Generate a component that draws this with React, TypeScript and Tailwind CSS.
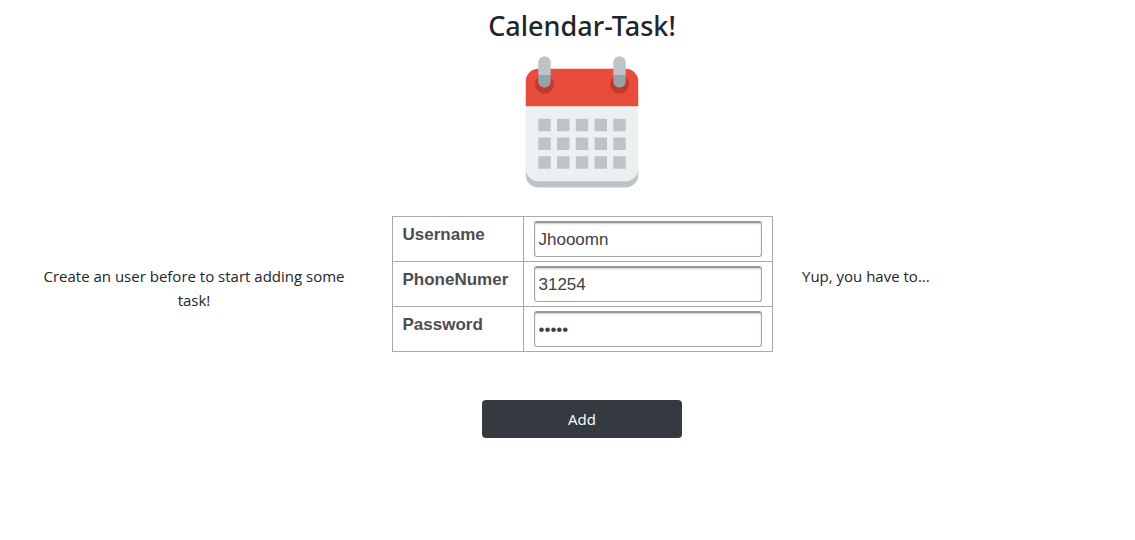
const fields = [
  { id: "username", label: "Username", type: "text", value: "Jhooomn" },
  { id: "phone", label: "PhoneNumer", type: "text", value: "31254" },
  { id: "password", label: "Password", type: "password", value: "12345" },
];

const dayColumns = [5, 8, 11, 14, 17];
const dayRows = [11, 14, 17];

function CalendarIcon() {
  return (
    <svg viewBox="0 0 24 24" className="size-[150px]" role="img" aria-label="Calendar">
      <path d="M3 19h18v1a2 2 0 0 1-2 2H5a2 2 0 0 1-2-2z" fill="#bdc3c7" />
      <path d="M3 8h18v11a2 2 0 0 1-2 2H5a2 2 0 0 1-2-2z" fill="#ecf0f1" />
      <path d="M5 3h14a2 2 0 0 1 2 2v4H3V5a2 2 0 0 1 2-2z" fill="#e74c3c" />
      {[6, 18].map((x) => (
        <g key={x}>
          <circle cx={x} cy="5.5" r="1.5" fill="#c0392b" />
          <path d={`M${x - 1} 4V2a1 1 0 0 1 2 0v2z`} fill="#bdc3c7" />
          <path d={`M${x - 1} 4h2v1a1 1 0 0 1-2 0z`} fill="#95a5a6" />
        </g>
      ))}
      {dayRows.map((y) =>
        dayColumns.map((x) => (
          <rect key={`${x}-${y}`} x={x} y={y} width="2" height="2" fill="#bdc3c7" />
        )),
      )}
    </svg>
  );
}

export default function App() {
  return (
    <main className="grid grid-cols-[388fr_388fr_359fr] items-start bg-white font-['Open_Sans','Noto_Sans',sans-serif] text-[15px] leading-6 text-[#212529]">
      <header className="col-start-2 flex flex-col items-center pt-2">
        <h1 className="font-['Noto_Sans','Open_Sans',sans-serif] text-[27px] leading-9 font-medium whitespace-nowrap">
          Calendar-Task!
        </h1>
        <div className="pt-1.5">
          <CalendarIcon />
        </div>
      </header>

      <p className="col-start-1 row-start-2 px-8 pt-16 text-center">
        Create an user before to start adding some task!
      </p>

      <form
        className="col-start-2 row-start-2 flex flex-col items-center pt-4"
        onSubmit={(e) => e.preventDefault()}
      >
        <table className="border-collapse font-['Liberation_Sans',Arial,sans-serif] text-[17px]">
          <tbody>
            {fields.map((f) => (
              <tr key={f.id}>
                <th
                  scope="row"
                  className="min-w-[131px] border border-[#a9a9a9] px-2.5 pt-1.5 text-left align-top leading-6 font-bold text-[#4d4d4d]"
                >
                  <label htmlFor={f.id}>{f.label}</label>
                </th>
                <td className="border border-[#a9a9a9] px-2.5 py-1">
                  <input
                    id={f.id}
                    type={f.type}
                    defaultValue={f.value}
                    className="block h-9 w-[228px] rounded-[3px] border border-t-2 border-[#a6a6a6] border-t-[#999999] bg-white px-1 text-[17px] text-[#404040] shadow-[inset_0_1px_2px_#cccccc] outline-none"
                  />
                </td>
              </tr>
            ))}
          </tbody>
        </table>
        <button
          type="submit"
          className="mt-12 h-[38px] w-[200px] rounded bg-[#343a40] text-center text-white"
        >
          Add
        </button>
      </form>

      <p className="col-start-3 row-start-2 pt-16 pl-[26px]">Yup, you have to...</p>
    </main>
  );
}
